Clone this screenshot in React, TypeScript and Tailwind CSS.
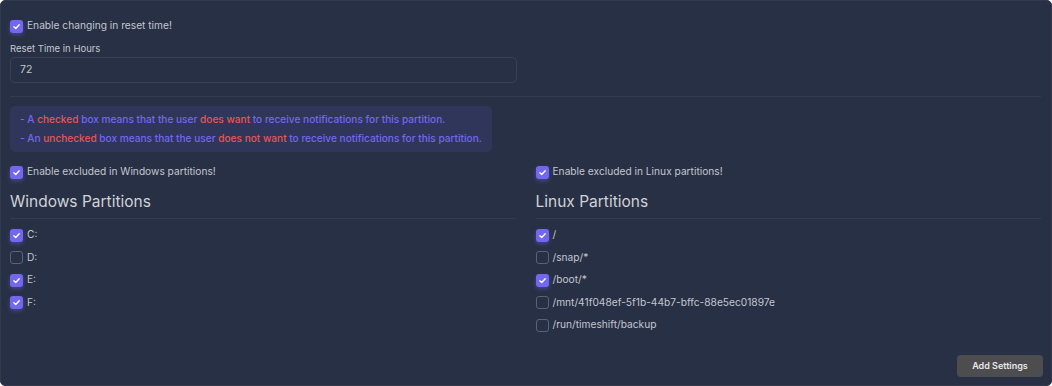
const Check = ({ on }: { on: boolean }) =>
  on ? (
    <span className="flex h-[13px] w-[13px] shrink-0 items-center justify-center rounded-[3px] bg-[#7367f0] shadow-[0_2px_4px_rgba(115,103,240,0.4)]">
      <svg viewBox="0 0 12 12" className="h-[9px] w-[9px]" fill="none" stroke="white" strokeWidth="1.8" strokeLinecap="round" strokeLinejoin="round">
        <path d="M2.5 6.3 5 8.6 9.6 3.6" />
      </svg>
    </span>
  ) : (
    <span className="h-[13px] w-[13px] shrink-0 rounded-[3px] border border-[#5c6275]" />
  );

const CheckRow = ({ on, label }: { on: boolean; label: string }) => (
  <div className="flex h-4 items-center gap-[4px]">
    <Check on={on} />
    <span className="text-[10.2px] text-[#c4c7cd]">{label}</span>
  </div>
);

const Partitions = ({
  toggle,
  title,
  items,
}: {
  toggle: string;
  title: string;
  items: [string, boolean][];
}) => (
  <div className="flex flex-col">
    <CheckRow on label={toggle} />
    <h4 className="mt-[12px] text-[15.5px] leading-5 text-[#d0d2d6]">{title}</h4>
    <div className="mt-[6px] h-px bg-[#343b4f]" />
    <div className="mt-[8px] flex flex-col gap-[6.5px]">
      {items.map(([name, on]) => (
        <CheckRow key={name} on={on} label={name} />
      ))}
    </div>
  </div>
);

const App = () => {
  return (
    <div
      className="flex h-[386px] w-[1052px] flex-col rounded-[5px] border border-[#33394c] bg-[#283046] pt-[9px] pr-[8px] pb-[8px] pl-[9px] text-[#b4b7bd]"
      style={{ fontFamily: 'Inter, "Noto Sans", sans-serif' }}
    >
      <div className="mt-[8px]">
        <CheckRow on label="Enable changing in reset time!" />
      </div>
      <label className="mt-[9px] text-[9.5px] leading-3 text-[#c4c7cd]">Reset Time in Hours</label>
      <div className="mt-[2px] flex h-[26px] w-[507px] items-center rounded-[5px] border border-[#3a4155] px-[9px] text-[10.5px] text-[#c4c7cd]">
        72
      </div>
      <div className="mt-[13px] mr-[2px] h-px bg-[#343b4f]" />
      <div className="mt-[9px] w-fit rounded-[5px] bg-[#30355a] px-[10px] py-[4px] text-[10.1px] font-medium leading-[19px] text-[#7367f0]">
        <p>
          - A <span className="text-[#ea5455]">checked</span> box means that the user{' '}
          <span className="text-[#ea5455]">does want</span> to receive notifications for this partition.
        </p>
        <p>
          - An <span className="text-[#ea5455]">unchecked</span> box means that the user{' '}
          <span className="text-[#ea5455]">does not want</span> to receive notifications for this partition.
        </p>
      </div>
      <div className="mt-[12px] mr-[2px] grid grid-cols-2 gap-x-5">
        <Partitions
          toggle="Enable excluded in Windows partitions!"
          title="Windows Partitions"
          items={[
            ['C:', true],
            ['D:', false],
            ['E:', true],
            ['F:', true],
          ]}
        />
        <Partitions
          toggle="Enable excluded in Linux partitions!"
          title="Linux Partitions"
          items={[
            ['/', true],
            ['/snap/*', false],
            ['/boot/*', true],
            ['/mnt/41f048ef-5f1b-44b7-bffc-88e5ec01897e', false],
            ['/run/timeshift/backup', false],
          ]}
        />
      </div>
      <div className="mt-auto flex justify-end">
        <button className="h-[22px] w-[86px] rounded-[4px] bg-[#4d4d4f] text-[9px] font-semibold text-[#e8e8e8]">
          Add Settings
        </button>
      </div>
    </div>
  );
};

export default App;
